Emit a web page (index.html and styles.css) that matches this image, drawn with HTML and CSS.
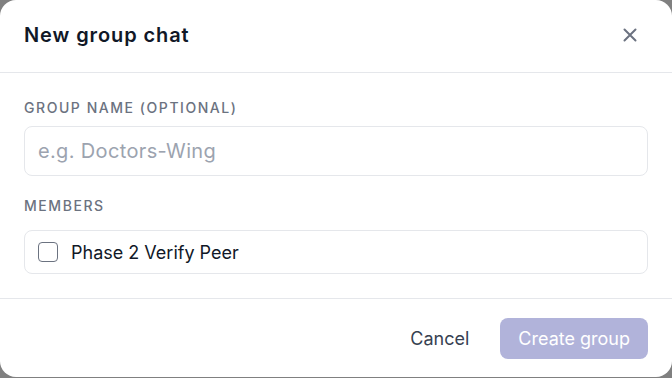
FILE: index.html
```html
<!DOCTYPE html>
<html>
<head>
<meta charset="utf-8">
<link rel="stylesheet" href="styles.css">
</head>
<body>
<div class="dialog">
  <div class="header">
    <h2 class="title">New group chat</h2>
    <button class="close" aria-label="Close">
      <svg width="16" height="16" viewBox="0 0 16 16"><path d="M2.5 2.5 L13.5 13.5 M13.5 2.5 L2.5 13.5" stroke="#6b7280" stroke-width="2" stroke-linecap="round" fill="none"/></svg>
    </button>
  </div>
  <div class="body">
    <div class="label">GROUP NAME (OPTIONAL)</div>
    <input class="input" type="text" placeholder="e.g. Doctors-Wing">
    <div class="label members-label">MEMBERS</div>
    <label class="member">
      <span class="checkbox"></span>
      <span class="member-name">Phase 2 Verify Peer</span>
    </label>
  </div>
  <div class="footer">
    <button class="cancel">Cancel</button>
    <button class="create">Create group</button>
  </div>
</div>
</body>
</html>
```
FILE: styles.css
```css
* { box-sizing: border-box; }
html, body { margin: 0; padding: 0; }
body {
  background: #808080;
  width: 672px;
  height: 378px;
  overflow: hidden;
  font-family: Inter, "Noto Sans", sans-serif;
}
.dialog {
  width: 672px;
  height: 377px;
  background: #fff;
  border-radius: 16px;
  display: flex;
  flex-direction: column;
}
.header {
  height: 73px;
  border-bottom: 1px solid #e5e7eb;
  display: flex;
  align-items: center;
  justify-content: space-between;
  padding: 0 24px 2px 24px;
}
.title {
  margin: 0;
  font-size: 20px;
  font-weight: 600;
  color: #111827;
  letter-spacing: 0.9px;
}
.close {
  border: none;
  background: none;
  padding: 0;
  width: 16px;
  height: 16px;
  margin-right: 10px;
  display: flex;
}
.body {
  padding: 24px 24px 24px 24px;
  display: flex;
  flex-direction: column;
  border-bottom: 1px solid #e5e7eb;
}
.label {
  font-size: 14px;
  line-height: 20px;
  font-weight: 500;
  color: #6b7280;
  letter-spacing: 1.55px;
  margin-top: 1px;
  margin-bottom: 8px;
}
.input {
  height: 50px;
  border: 1px solid #e5e7eb;
  border-radius: 8px;
  padding: 0 13px;
  font-family: inherit;
  font-size: 20px;
  letter-spacing: 0.35px;
  color: #111827;
  outline: none;
}
.input::placeholder { color: #9ca3af; }
.members-label {
  margin-top: 20px;
  margin-bottom: 14px;
}
.member {
  height: 44px;
  border: 1px solid #e5e7eb;
  border-radius: 8px;
  display: flex;
  align-items: center;
  padding: 0 13px;
  gap: 13px;
}
.checkbox {
  width: 20px;
  height: 20px;
  border: 1.5px solid #6b7280;
  border-radius: 4px;
  background: #fff;
}
.member-name {
  font-size: 18px;
  color: #111827;
  font-weight: 400;
}
.footer {
  flex: 1;
  display: flex;
  align-items: center;
  justify-content: flex-end;
  padding: 1px 24px 0 24px;
  gap: 30px;
}
.cancel {
  border: none;
  background: none;
  font-family: inherit;
  font-size: 18px;
  color: #374151;
  padding: 0 1px 0 0;
}
.create {
  border: none;
  background: #b1b3da;
  color: #fff;
  font-family: inherit;
  font-size: 18px;
  height: 41px;
  border-radius: 8px;
  padding: 0 18px;
}
```
